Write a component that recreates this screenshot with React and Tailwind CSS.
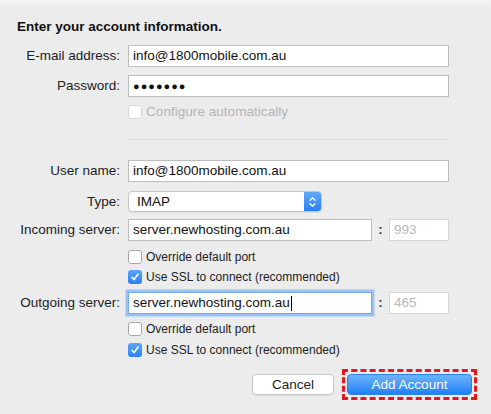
import React from "react";

const font = { fontFamily: '"Liberation Sans", Arial, sans-serif' };

function Label({ children }) {
  return <div className="w-[120px] shrink-0 text-right text-[13.5px] leading-[16px] text-[#1d1d1d]">{children}</div>;
}

function Box({ checked, disabled }) {
  if (checked) {
    return (
      <span className="flex h-[14px] w-[14px] shrink-0 items-center justify-center rounded-[3px] bg-gradient-to-b from-[#5aa6f9] to-[#2b7ff4]">
        <svg width="10" height="10" viewBox="0 0 10 10">
          <path d="M2 5.3 L4 7.6 L8 2.2" fill="none" stroke="#fff" strokeWidth="1.6" strokeLinecap="round" strokeLinejoin="round" />
        </svg>
      </span>
    );
  }
  return (
    <span
      className={`h-[14px] w-[14px] shrink-0 rounded-[3px] border bg-white ${
        disabled ? "border-[#d9d9d9]" : "border-[#a9a9a9]"
      }`}
    />
  );
}

function Check({ checked, disabled, big, className = "", children }) {
  return (
    <div className={`flex h-[14px] items-center gap-[4px] pl-[128px] ${className}`}>
      <Box checked={checked} disabled={disabled} />
      <span
        className={`leading-[14px] ${big ? "text-[13.6px]" : "text-[12px]"} ${
          disabled ? "text-[#b5b5b5]" : "text-[#1d1d1d]"
        }`}
      >
        {children}
      </span>
    </div>
  );
}

function Field({ value, focus, className = "" }) {
  return (
    <div
      className={`flex h-[22px] items-center border bg-white px-[4px] text-[13.5px] leading-[16px] text-[#111] ${
        focus ? "border-[#7aa9e6] shadow-[0_0_0_2.5px_#9cc2f0]" : "border-[#bdbdbd]"
      } ${className}`}
    >
      {value}
      {focus && <span className="ml-[1px] inline-block h-[15px] w-[1px] bg-black" />}
    </div>
  );
}

function Port({ value }) {
  return (
    <>
      <span className="w-[17px] text-center text-[13px] font-bold leading-[16px] text-[#333]">:</span>
      <div className="flex h-[22px] w-[60px] items-center border border-[#d6d6d6] bg-white px-[4px] text-[13.5px] leading-[16px] text-[#b8b8b8]">
        {value}
      </div>
    </>
  );
}

export default function App() {
  return (
    <div
      className="h-[414px] w-[491px] overflow-hidden bg-[linear-gradient(#f4f4f4,#ececec_8px)] pt-[19px]"
      style={font}
    >
      <div className="h-[16px] pl-[17px] text-[13.5px] font-bold leading-[16px] text-[#111]">
        Enter your account information.
      </div>

      <div className="mt-[10px] flex items-center gap-2">
        <Label>E-mail address:</Label>
        <Field value="info@1800mobile.com.au" className="w-[321px]" />
      </div>
      <div className="mt-[8px] flex items-center gap-2">
        <Label>Password:</Label>
        <Field value={<span className="text-[11px] tracking-[1px]">●●●●●●●</span>} className="w-[321px]" />
      </div>
      <Check disabled big className="mt-[8px]">
        Configure automatically
      </Check>

      <div className="ml-[128px] mt-[20px] h-px w-[321px] bg-[#d8d8d8]" />

      <div className="mt-[20px] flex items-center gap-2">
        <Label>User name:</Label>
        <Field value="info@1800mobile.com.au" className="w-[321px]" />
      </div>
      <div className="mt-[9px] flex items-center gap-2">
        <Label>Type:</Label>
        <div className="flex h-[21px] w-[194px] overflow-hidden rounded-[4px] border border-[#c6c6c6] bg-white shadow-[0_1px_0_rgba(0,0,0,0.05)]">
          <span className="flex-1 pl-[8px] text-[13.5px] leading-[19px] text-[#111]">IMAP</span>
          <span className="flex w-[17px] items-center justify-center bg-gradient-to-b from-[#5ea8fa] to-[#2a7ff5]">
            <svg width="9" height="14" viewBox="0 0 9 14">
              <path d="M2 5.2 L4.5 2.8 L7 5.2 M2 8.8 L4.5 11.2 L7 8.8" fill="none" stroke="#fff" strokeWidth="1.3" strokeLinecap="round" strokeLinejoin="round" />
            </svg>
          </span>
        </div>
      </div>
      <div className="mt-[7px] flex items-center gap-2">
        <Label>Incoming server:</Label>
        <Field value="server.newhosting.com.au" className="w-[244px]" />
        <div className="-ml-2 flex items-center">
          <Port value="993" />
        </div>
      </div>
      <Check className="mt-[9px]">Override default port</Check>
      <Check checked className="mt-[6px]">
        Use SSL to connect (recommended)
      </Check>

      <div className="mt-[8px] flex items-center gap-2">
        <Label>Outgoing server:</Label>
        <Field value="server.newhosting.com.au" focus className="w-[244px]" />
        <div className="-ml-2 flex items-center">
          <Port value="465" />
        </div>
      </div>
      <Check className="mt-[8px]">Override default port</Check>
      <Check checked className="mt-[7px]">
        Use SSL to connect (recommended)
      </Check>

      <div className="mt-[12px] flex items-center justify-end gap-[8px] pr-[14px]">
        <button className="h-[21px] w-[82px] rounded-[4px] border border-[#c8c8c8] bg-white text-[13.5px] leading-[16px] text-[#1d1d1d] shadow-[0_1px_0_rgba(0,0,0,0.06)]">
          Cancel
        </button>
        <div className="border-[3px] border-dashed border-[#e8151b] p-[2px]">
          <button className="block h-[21px] w-[125px] rounded-[4px] border border-[#2d7fe8] bg-gradient-to-b from-[#6cb4fb] to-[#1d80f6] text-[13.5px] leading-[16px] text-white">
            Add Account
          </button>
        </div>
      </div>
    </div>
  );
}
